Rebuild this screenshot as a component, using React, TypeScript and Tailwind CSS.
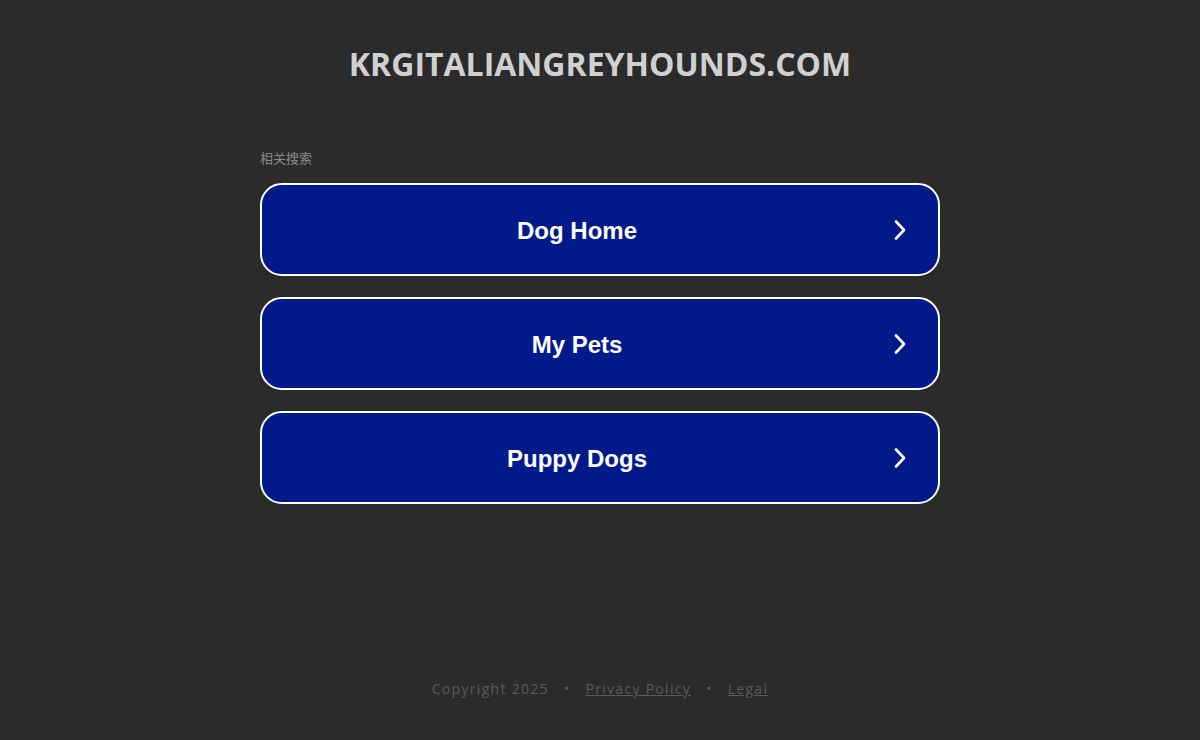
const links = ["Dog Home", "My Pets", "Puppy Dogs"];

function Chevron() {
  return (
    <svg width="16" height="22" viewBox="0 0 16 22" fill="none" className="shrink-0">
      <path d="M4 2.5 L12 11 L4 19.5" stroke="white" strokeWidth="2.6" strokeLinecap="round" strokeLinejoin="round" />
    </svg>
  );
}

export default function App() {
  return (
    <div className="flex min-h-[740px] flex-col items-center bg-[#2b2b2b] font-['Open_Sans',sans-serif]">
      <h1 className="mt-[42px] text-[32px] leading-[44px] font-bold text-[#d0d0d0]">KRGITALIANGREYHOUNDS.COM</h1>

      <div className="mt-[63px] w-[680px]">
        <div className="mb-[16px] text-[13px] leading-[18px] text-[#8a8a8a] font-['Noto_Sans_CJK_SC',sans-serif]">相关搜索</div>
        <div className="flex flex-col gap-[21px]">
          {links.map((l) => (
            <a
              key={l}
              href="#"
              className="flex h-[93px] items-center rounded-[22px] border-2 border-white bg-[#011a8a]"
            >
              <span className="flex-1 pt-[2px] text-center font-['Liberation_Sans',Arial,sans-serif] text-[24px] font-bold text-white">{l}</span>
              <span className="mr-[30px]">
                <Chevron />
              </span>
            </a>
          ))}
        </div>
      </div>

      <div className="mt-[174px] flex items-center gap-[15px] text-[14px] tracking-[1.3px] text-[#5a5a5a]">
        <span>Copyright 2025</span>
        <span>•</span>
        <a href="#" className="underline">Privacy Policy</a>
        <span>•</span>
        <a href="#" className="underline">Legal</a>
      </div>
    </div>
  );
}
